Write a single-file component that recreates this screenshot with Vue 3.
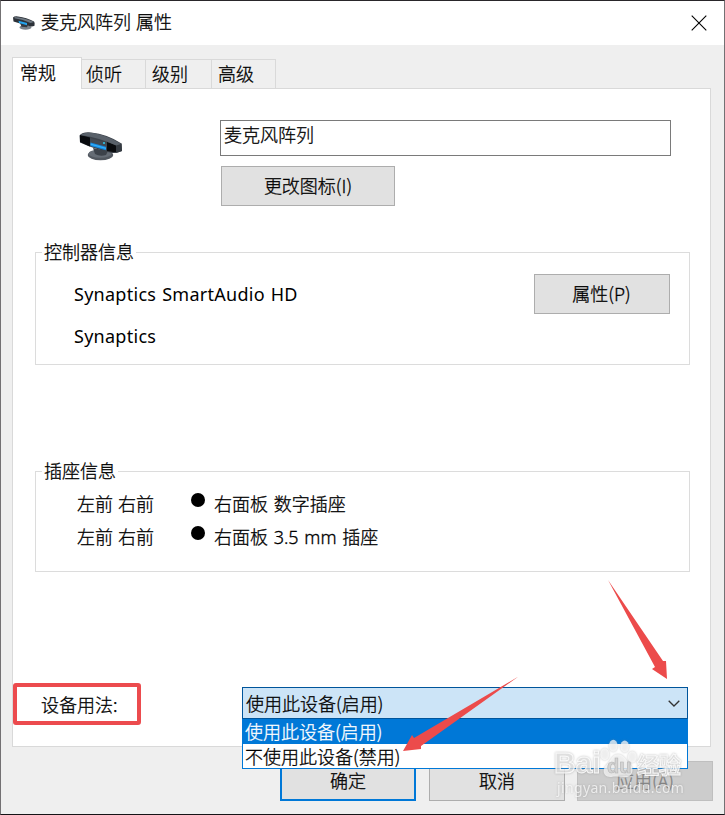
<script setup>
const tabs = ['常规', '侦听', '级别', '高级']
const jacks = ['右面板 数字插座', '右面板 3.5 mm 插座']
const options = ['使用此设备(启用)', '不使用此设备(禁用)']
</script>

<template>
  <main class="dialog">
    <header class="titlebar">
      <svg class="title-icon" viewBox="0 0 44 30" preserveAspectRatio="none">
        <ellipse cx="25" cy="24.5" rx="12" ry="4.8" fill="#7b828a" />
        <path d="M14 15 30 19 28 24 17 23Z" fill="#343a42" />
        <path d="M0 3Q3 0 10 1Q27 3 42 12Q44 14 43 21Q39 23 34 22Q15 17 1 12Z" fill="#2c3138" />
        <path d="M3 2Q22 3 42 13L35 15Q20 8 3 5Z" fill="#6e7882" />
        <path d="M11 10 28 15V20L12 15Z" fill="#23a3ee" />
      </svg>
      <h1 class="title">麦克风阵列 属性</h1>
      <svg class="close" viewBox="0 0 16 16"><path d="M.7.7 15.3 15.3M15.3.7.7 15.3" /></svg>
    </header>

    <nav class="tabs">
      <div v-for="(t, i) in tabs" :key="t" class="tab" :class="{ active: i === 0 }">{{ t }}</div>
    </nav>

    <section class="panel">
      <div class="identity">
        <svg class="device" viewBox="0 0 44 30">
          <ellipse cx="21.5" cy="24" rx="12.7" ry="5.2" fill="#525860" />
          <ellipse cx="21" cy="22.7" rx="11.500" ry="4" fill="#656c75" />
          <path d="M14 17 29 20 27 24Q21 26 16 23Z" fill="#3c424a" />
          <path d="M.5 4.5Q4 .5 12 1.5Q28 3 42.5 12.5L43 20Q38 22.5 33 22Q15 18 1 11.5Z" fill="#3c424a" />
          <path d="M1 4 11 6.5V15.5L1 11Z" fill="#090b0e" />
          <path d="M28 11 37 14V21.5L28 20Z" fill="#090b0e" />
          <path d="M37 14 42.5 12.5 43 20 37 22Z" fill="#353b42" />
          <path d="M1 4Q6 1 14 2Q30 5 42 13L37 14.5Q20 6.5 1 4Z" fill="#59616a" />
          <path d="M11 7 28 12V17L11 12Z" fill="#424952" />
          <path d="M11.5 11.500 27 15.8V19.3L11.5 15Z" fill="#1688df" />
          <path d="M11.5 12.500 27 16.8V18L11.5 13.7Z" fill="#33b0fa" />
          <circle cx="25" cy="12" r="1.1" fill="#31c4e8" />
        </svg>
        <div class="identity-fields">
          <div class="field">麦克风阵列</div>
          <div class="button change">更改图标(I)</div>
        </div>
      </div>

      <div class="group controller">
        <span class="legend">控制器信息</span>
        <div class="controller-info">
          <span class="product">Synaptics SmartAudio HD</span>
          <span class="vendor">Synaptics</span>
        </div>
        <div class="button props">属性(P)</div>
      </div>

      <div class="group jacks">
        <span class="legend">插座信息</span>
        <div v-for="j in jacks" :key="j" class="jack">
          <span class="channels">左前 右前</span>
          <i class="dot"></i>
          <span class="socket">{{ j }}</span>
        </div>
      </div>

      <div class="usage">
        <div class="usage-label">设备用法:</div>
        <div class="combo">
          <span>{{ options[0] }}</span>
          <svg class="chevron" viewBox="0 0 12 7"><path d="M.7.7 6 6 11.3.7" /></svg>
          <div class="menu">
            <div v-for="(o, i) in options" :key="o" class="option" :class="{ selected: i === 0 }">{{ o }}</div>
          </div>
        </div>
      </div>
    </section>

    <footer class="actions">
      <div class="button ok">确定</div>
      <div class="button">取消</div>
      <div class="button disabled">应用(A)</div>
    </footer>

    <div class="watermark">
      <div class="brand">
        <span class="bai">Bai</span>
        <span class="paw">
          <svg viewBox="0 0 40 42">
            <ellipse cx="5" cy="17" rx="4.7" ry="6.3" />
            <ellipse cx="14" cy="8" rx="4.5" ry="6.3" />
            <ellipse cx="26" cy="9" rx="4.5" ry="6.3" />
            <ellipse cx="34" cy="20" rx="4.7" ry="6" />
            <path d="M19 17C25 17 27 23 31 27C37 32 34 41 27 41C22 41 17 40 12 41C4 42 1 34 7 28C11 24 13 17 19 17Z" />
          </svg>
          <b>du</b>
        </span>
        <span class="exp">经验</span>
      </div>
      <div class="url">jingyan.baidu.com</div>
    </div>

    <svg class="arrows" viewBox="0 0 725 815">
      <path d="M608 580 663 661 666 661 667 679 652 669 655 667Z" />
      <path d="M518.500 676.500 421 746 421 749 403 751 412 735 414 738Z" />
    </svg>
  </main>
</template>

<style>
body { margin: 0; background: #efefef; }
</style>

<style scoped>
* { box-sizing: border-box; }
.dialog {
  position: relative;
  width: 725px;
  height: 815px;
  display: flex;
  flex-direction: column;
  overflow: hidden;
  background: #efefef;
  border: 1px solid #737173;
  border-top-color: #29262a;
  border-bottom-color: #151316;
  font: 300 18px/24px "Noto Sans CJK SC", sans-serif;
  -webkit-text-stroke: .3px currentColor;
  word-spacing: 1px;
  color: #000;
  white-space: nowrap;
}
.titlebar {
  height: 44px;
  flex: none;
  display: flex;
  align-items: center;
  background: #fff;
  padding: 0 17px 0 12px;
}
.title-icon { width: 22px; height: 14px; margin-right: 6px; }
.title { margin: 0; padding-bottom: 4px; font: inherit; flex: 1; }
.close { width: 16px; height: 16px; fill: none; stroke: #000; stroke-width: 1.1; }
.tabs {
  height: 43px;
  flex: none;
  display: flex;
  align-items: flex-end;
  padding-left: 11px;
}
.tab {
  height: 29px;
  width: 66px;
  border: 1px solid #d9d9d9;
  border-width: 1px 1px 0 0;
  padding: 1px 0 0 6px;
}
.tab:nth-child(2) { width: 64px; padding-left: 4px; }
.tab:nth-child(4) { width: 64px; }
.tab.active {
  position: relative;
  z-index: 1;
  width: 70px;
  height: 32px;
  margin-bottom: -1px;
  border-width: 1px 1px 0;
  background: #fff;
  padding: 2px 0 0 7px;
}
.panel {
  width: 699px;
  height: 659px;
  flex: none;
  margin-left: 11px;
  background: #fff;
  border: 1px solid #d9d9d9;
  padding-top: 31px;
}
.identity { display: flex; height: 86px; }
.device { width: 44px; height: 30px; margin: 11px 97px 0 66px; }
.field { width: 451px; height: 36px; border: 1px solid #7a7a7a; padding: 1px 3px; }
.button {
  height: 40px;
  width: 136px;
  border: 1px solid #adadad;
  background: #e1e1e1;
  display: flex;
  align-items: center;
  justify-content: center;
  padding: 0 0 2px;
}
.change { width: 174px; margin: 10px 0 0 1px; }
.props { padding-right: 1px; }
.group {
  position: relative;
  width: 655px;
  margin-left: 22px;
  border: 1px solid #dcdcdc;
}
.legend {
  position: absolute;
  left: 6px;
  top: -14px;
  background: #fff;
  padding: 0 2px;
}
.controller {
  margin-top: 46px;
  height: 113px;
  display: flex;
  justify-content: space-between;
  padding: 21px 19px 0 38px;
}
.controller-info {
  display: flex;
  flex-direction: column;
  gap: 18px;
  padding-top: 8px;
  font-family: "Noto Sans", sans-serif;
  font-weight: 400;
  letter-spacing: .27px;
  -webkit-text-stroke: 0;
}
.jacks { margin-top: 106px; height: 101px; padding: 19px 0 0 41px; }
.jack { display: flex; height: 33px; }
.channels { width: 114px; }
.socket { padding-top: 1px; font-family: "Noto Sans", "Noto Sans CJK SC", sans-serif; }
.dot { width: 14px; height: 14px; margin: 2px 9px 0 0; border-radius: 50%; background: #000; }
.usage { display: flex; align-items: flex-start; margin-top: 111px; }
.usage-label {
  width: 128px;
  height: 42px;
  border: 4px solid #ec4b4e;
  border-radius: 3px;
  padding: 5px 0 0 24px;
}
.combo {
  position: relative;
  width: 446px;
  height: 32px;
  margin: 4px 0 0 101px;
  border: 1px solid #00559b;
  background: #cce4f7;
  display: flex;
  align-items: center;
  justify-content: space-between;
  padding: 0 7px 0 3px;
}
.chevron { width: 12px; height: 7px; fill: none; stroke: #333; stroke-width: 1.3; }
.menu {
  position: absolute;
  z-index: 3;
  left: -1px;
  top: 31px;
  width: 446px;
  height: 50px;
  border: 1px solid #0078d7;
  border-top: 0;
  background: #fff;
}
.option { height: 25px; line-height: 24px; padding-left: 2px; }
.option.selected { background: #0078d7; color: #fff; }
.actions { display: flex; gap: 13px; margin: 14px 0 0 279px; }
.ok { border: 2px solid #0078d7; }
.disabled { margin-left: -1px; background: #ccc; border-color: #bfbfbf; color: #838383; }
.watermark {
  position: absolute;
  z-index: 4;
  left: 553px;
  top: 736px;
  width: 134px;
  color: rgba(255, 255, 255, .7);
  filter: drop-shadow(0 0 1px rgba(125, 125, 125, .6));
  -webkit-text-stroke: 0;
}
.brand {
  display: flex;
  height: 42px;
  align-items: flex-end;
  font-weight: 700;
  color: rgba(235, 235, 235, .65);
  -webkit-text-stroke: 1px rgba(255, 255, 255, .85);
}
.bai { width: 46px; font: 700 30px/32px "Liberation Sans", sans-serif; }
.paw { position: relative; width: 37px; height: 42px; }
.paw svg { width: 38px; height: 42px; fill: rgba(255, 255, 255, .7); }
.paw b {
  position: absolute;
  left: 7px;
  top: 18px;
  color: #d4d4d4;
  -webkit-text-stroke: .6px #b4b4b4;
  font: 700 20px/22px "Liberation Sans", sans-serif;
}
.exp { font-size: 22px; line-height: 32px; }
.url { margin-left: 3px; font: 400 14px/18px "Noto Sans", sans-serif; letter-spacing: .35px; }
.arrows {
  position: absolute;
  z-index: 5;
  left: -1px;
  top: -1px;
  width: 725px;
  height: 815px;
  fill: #ec4b4b;
  pointer-events: none;
}
</style>
